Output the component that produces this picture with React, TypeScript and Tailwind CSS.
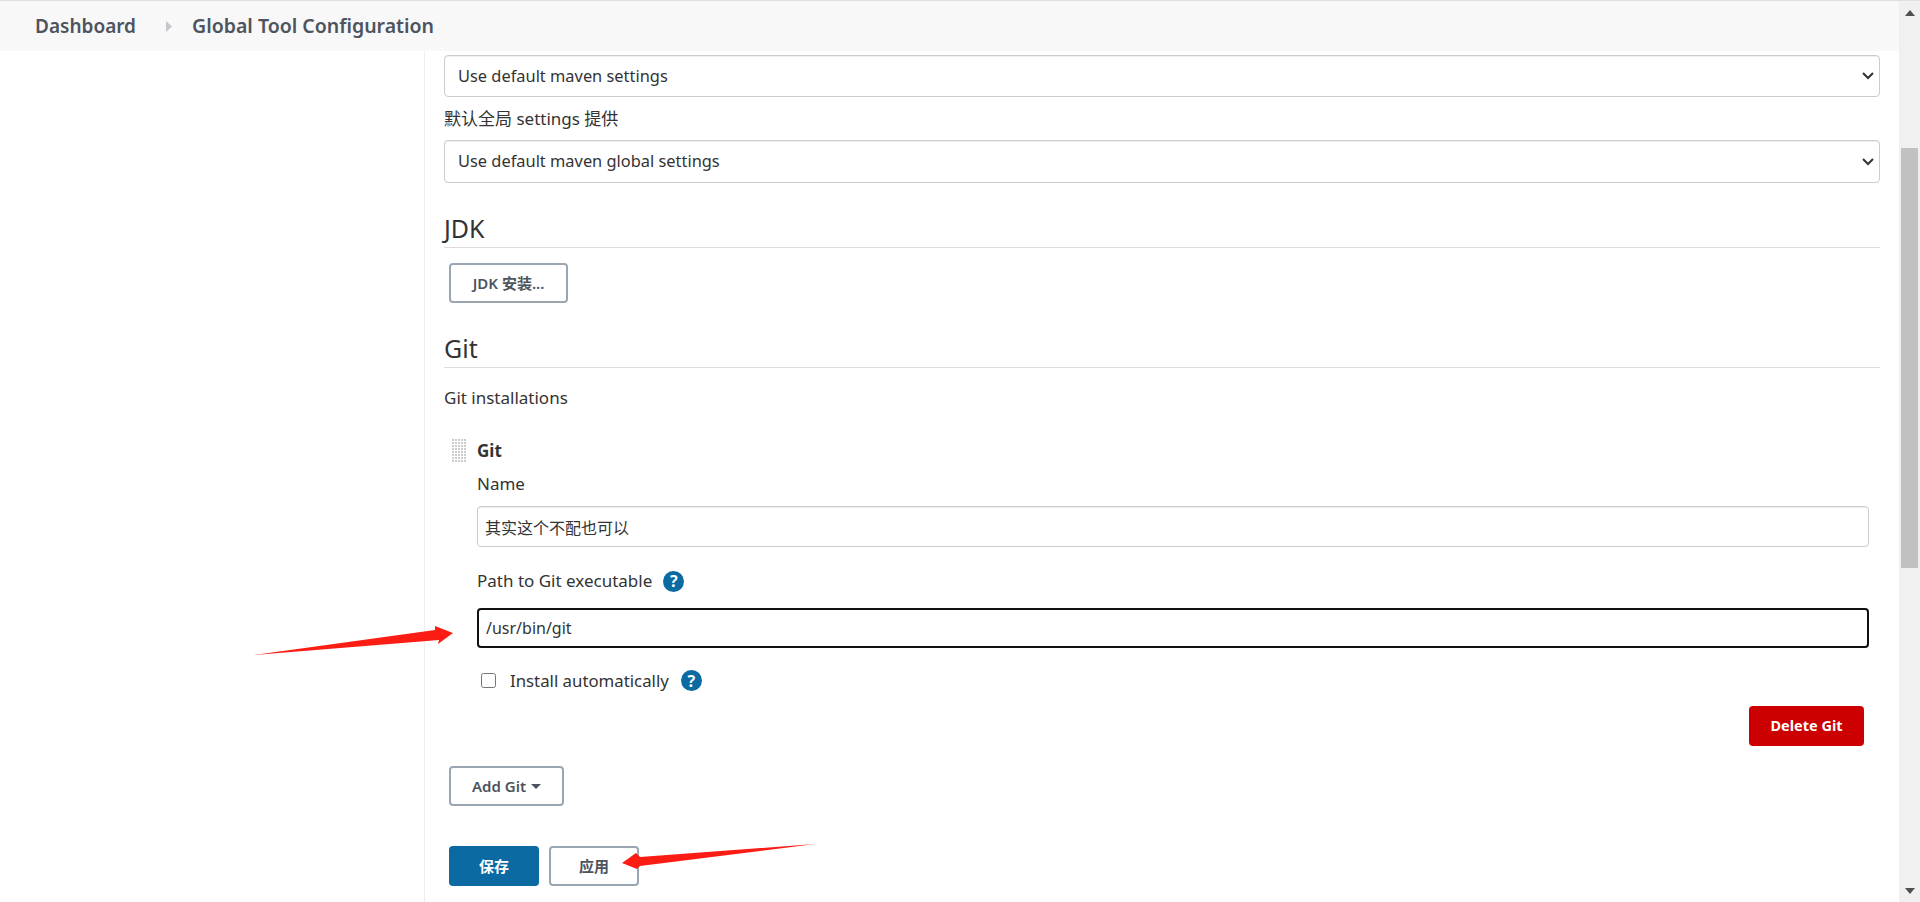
import React from "react";

const FONT = "font-['Noto_Sans','Noto_Sans_CJK_SC',sans-serif]";

function SelectBox({ label }: { label: string }) {
  return (
    <div className="flex h-full items-center justify-between rounded-[4px] border border-[#ccc] pl-[13px] pr-[5px] text-[16.4px] text-[#333] shadow-[inset_0_1px_1px_#eee]">
      <span>{label}</span>
      <svg width="12" height="8" viewBox="0 0 12 8" fill="none" stroke="#333" strokeWidth="2">
        <path d="M1 1l5 5 5-5" />
      </svg>
    </div>
  );
}

function HelpIcon() {
  return (
    <span className="flex h-[21px] w-[21px] items-center justify-center rounded-full bg-[#0b6aa2] text-[16px] font-bold text-white">
      ?
    </span>
  );
}

function Heading({ children }: { children: React.ReactNode }) {
  return (
    <div className="flex h-[38px] items-center border-b border-[#ddd] text-[25px] leading-none text-[#333]">
      {children}
    </div>
  );
}

function OutlineButton({ children, className }: { children: React.ReactNode; className: string }) {
  return (
    <button className={`flex h-10 items-center justify-center gap-[5px] rounded-[4px] border-2 border-[#9aa7b3] bg-white text-[15px] font-semibold text-[#4d545d] ${className}`}>
      {children}
    </button>
  );
}

function DragHandle() {
  return (
    <div className="grid h-[25px] w-[14px] grid-cols-[repeat(5,2px)] grid-rows-[repeat(8,2px)] gap-px">
      {Array.from({ length: 40 }).map((_, i) => (
        <span key={i} className="bg-[#ccc]" />
      ))}
    </div>
  );
}

function Arrow({ className, width, height, points }: { className: string; width: number; height: number; points: string }) {
  return (
    <svg className={`absolute ${className}`} width={width} height={height} viewBox={`0 0 ${width} ${height}`}>
      <polygon points={points} fill="#fb1d13" />
    </svg>
  );
}

export default function App() {
  return (
    <div className={`relative flex h-[902px] w-[1920px] overflow-hidden border-t border-[#dcdfe4] bg-white ${FONT}`}>
      <div className="flex w-[1899px] flex-col">
        <div className="flex h-[50px] shrink-0 items-center bg-[#f8f8f8] pl-[35px] text-[19.5px] font-semibold text-[#4d545d]">
          <span className="text-[19px]">Dashboard</span>
          <svg className="ml-[30px] mr-[20px]" width="6" height="11" viewBox="0 0 6 11">
            <path d="M0 0l6 5.5-6 5.5z" fill="#c4c8cc" />
          </svg>
          <span>Global Tool Configuration</span>
        </div>

        <div className="flex flex-1">
          <div className="w-[425px] shrink-0 border-r border-[#eee]" />

          <div className="flex-1 pl-[19px] pr-[19px] pt-1 text-[17px] text-[#333]">
            <div className="h-[42px]">
              <SelectBox label="Use default maven settings" />
            </div>
            <div className="flex h-[43px] items-center">默认全局 settings 提供</div>
            <div className="h-[43px]">
              <SelectBox label="Use default maven global settings" />
            </div>

            <div className="mt-[27px]">
              <Heading>JDK</Heading>
            </div>
            <OutlineButton className="ml-[5px] mt-[15px] w-[119px]">JDK 安装...</OutlineButton>

            <div className="mt-[27px]">
              <Heading>Git</Heading>
            </div>
            <div className="flex h-[59px] items-center">Git installations</div>

            <div className="mt-[11px] flex">
              <div className="ml-2 w-[25px] shrink-0 pt-px">
                <DragHandle />
              </div>
              <div className="mr-[11px] flex-1">
                <div className="flex h-[26px] items-center font-bold">Git</div>
                <div className="mt-[7px] flex h-[26px] items-center">Name</div>
                <input
                  readOnly
                  value="其实这个不配也可以"
                  className="mt-[9px] block h-[41px] w-full rounded-[4px] border border-[#ccc] px-[7px] text-[16px] text-[#333] shadow-[inset_0_1px_1px_#eee] outline-none"
                />
                <div className="mt-[21px] flex h-[26px] items-center gap-[11px]">
                  <span>Path to Git executable</span>
                  <HelpIcon />
                </div>
                <input
                  readOnly
                  value="/usr/bin/git"
                  className="mt-[14px] block h-10 w-full rounded-[4px] border-2 border-[#111] px-[7px] text-[16px] text-[#333] outline-none"
                />
                <div className="mt-[22px] flex h-[21px] items-center">
                  <input type="checkbox" className="ml-[4px] h-[15px] w-[15px]" />
                  <span className="ml-[14px] text-[16.8px]">Install automatically</span>
                  <span className="ml-[12px]">
                    <HelpIcon />
                  </span>
                </div>
                <div className="mr-[5px] mt-[15px] flex justify-end">
                  <button className="h-10 w-[115px] rounded-[4px] bg-[#cc0000] text-[14.5px] font-bold text-white">
                    Delete Git
                  </button>
                </div>
              </div>
            </div>

            <OutlineButton className="ml-[5px] mt-[20px] w-[115px]">
              Add Git
              <svg width="10" height="5" viewBox="0 0 10 5">
                <path d="M0 0h10L5 5z" fill="#4d545d" />
              </svg>
            </OutlineButton>

            <div className="ml-[5px] mt-[40px] flex gap-[10px]">
              <button className="h-10 w-[90px] rounded-[4px] bg-[#0b6aa2] text-[15px] font-semibold text-white">
                保存
              </button>
              <OutlineButton className="w-[90px]">应用</OutlineButton>
            </div>
          </div>
        </div>
      </div>

      <div className="relative w-[21px] shrink-0 bg-[#f0f0f0]">
        <div className="flex h-[24px] items-center justify-center">
          <svg width="10" height="6" viewBox="0 0 10 6">
            <path d="M5 0l5 6H0z" fill="#505050" />
          </svg>
        </div>
        <div className="ml-[2px] mt-[123px] h-[420px] w-[17px] bg-[#c1c1c1]" />
        <div className="mt-[312px] flex h-[22px] items-center justify-center">
          <svg width="10" height="6" viewBox="0 0 10 6">
            <path d="M5 6l5-6H0z" fill="#505050" />
          </svg>
        </div>
      </div>

      <Arrow
        className="left-[254px] top-[625px]"
        width={200}
        height={30}
        points="0,29 181,4 181,0 199,7 184,18 185,14"
      />
      <Arrow
        className="left-[622px] top-[843px]"
        width={194}
        height={26}
        points="193,0 18,13 14,9 0,19 15,25 18,22"
      />
    </div>
  );
}
